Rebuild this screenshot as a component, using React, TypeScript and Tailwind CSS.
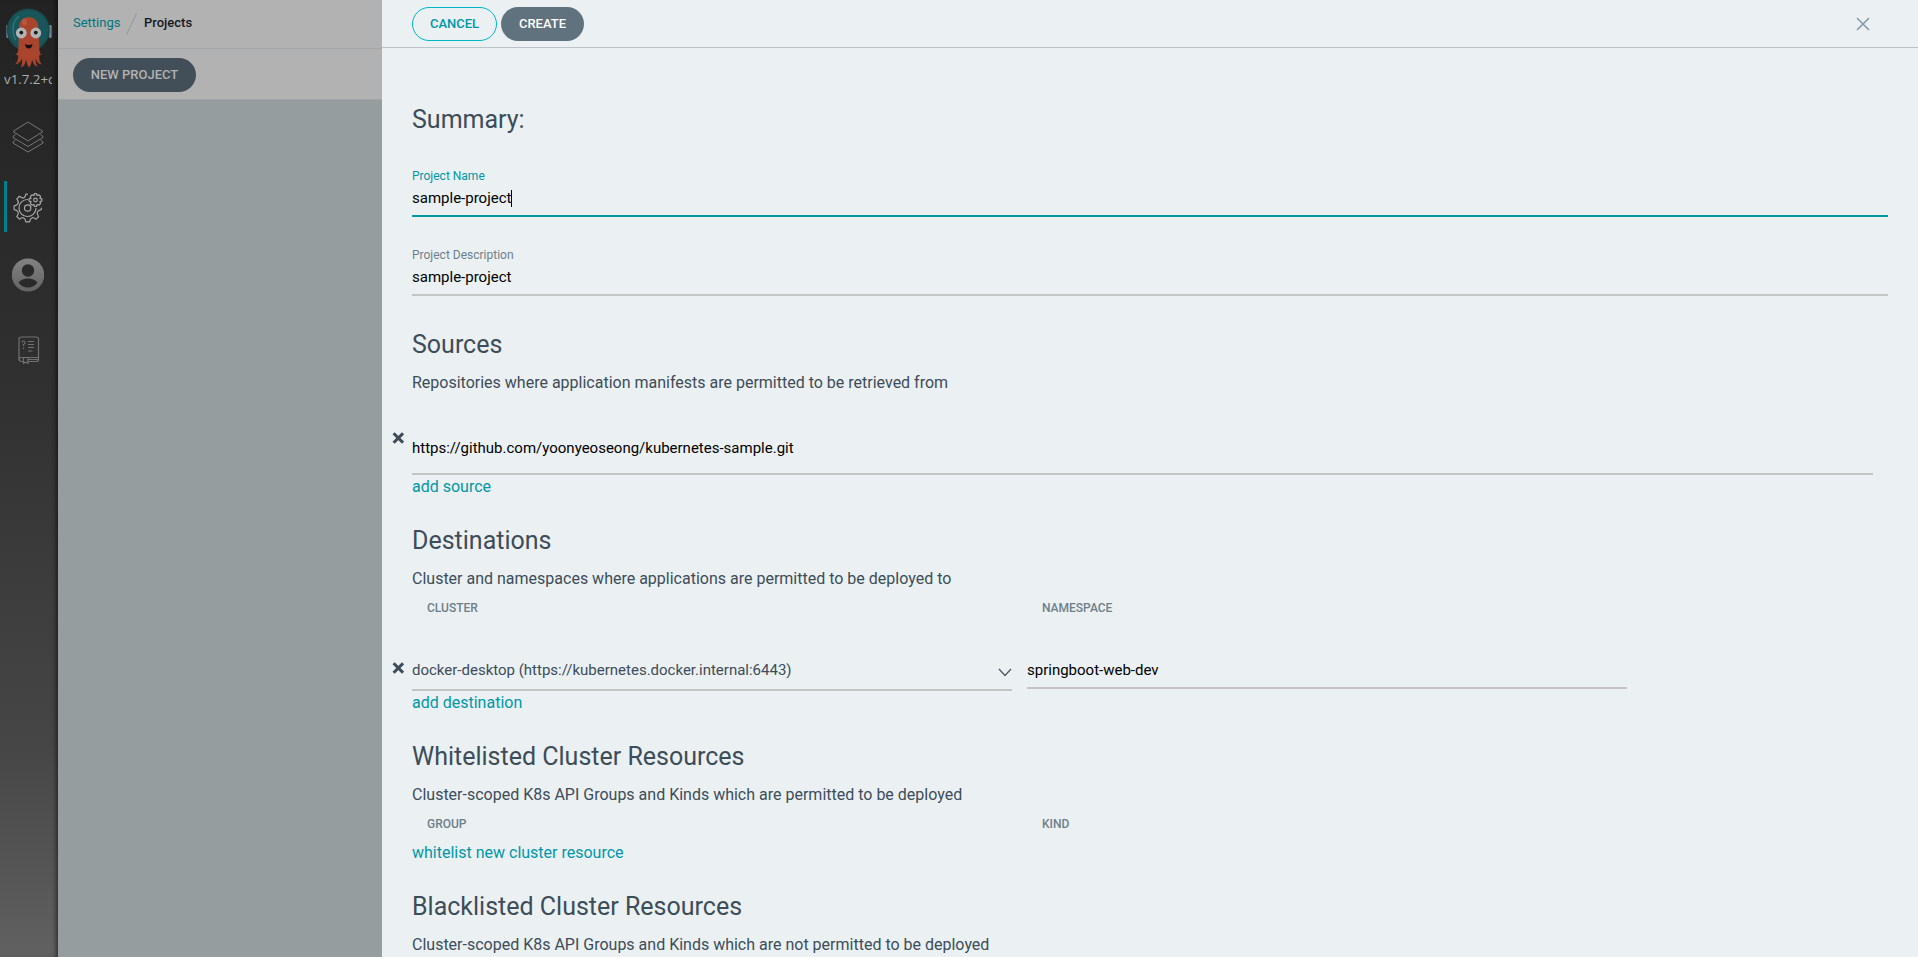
import React from "react";

function Logo() {
  return (
    <svg width="46" height="62" viewBox="0 0 46 62" className="block">
      <rect x="0.300" y="17" width="2.700" height="13" rx="1" fill="#6c8291" />
      <rect x="43" y="17" width="2.700" height="13" rx="1" fill="#6c8291" />
      <circle cx="22.300" cy="22" r="21.500" fill="#1b4a4e" />
      <circle cx="22.300" cy="22" r="19.800" fill="#17565a" />
      <path d="M12.500 8.500Q6.500 14 7 23Q7.300 28 9.500 31.500" fill="none" stroke="#3a7674" strokeWidth="1.200" strokeLinecap="round" />
      <path d="M13 19.500C13 5.500 32.500 5.500 32.500 19.500L33.300 38C33.300 44 34 46.500 36 46.500L33 47.500Q33 53 35.500 56.500Q31.500 56 29.500 50.500Q29.500 56 32 58.500Q27.500 58 26 51.500Q25.500 57 23 59.500Q20.800 57 20 51.500Q19.500 57.500 15 59.500Q16.500 55 16 50.500Q13.500 56 9 56.500Q12.500 53 12.300 47.500L9.500 46.500Q12.500 46 12.500 38Z" fill="#a9452d" />
      <ellipse cx="18.500" cy="14" rx="2.500" ry="3.200" fill="#b4593f" />
      <circle cx="15.300" cy="25" r="5.400" fill="#b3b3b3" />
      <circle cx="29.800" cy="25" r="5.400" fill="#b3b3b3" />
      <circle cx="15.300" cy="24.600" r="1.900" fill="#17181c" />
      <circle cx="29.800" cy="24.600" r="1.900" fill="#17181c" />
      <path d="M19 36Q22.700 38 26.500 36Q26 40.500 22.700 40.500Q19.500 40.500 19 36Z" fill="#1b1010" />
    </svg>
  );
}

function Layers() {
  return (
    <svg width="32" height="32" viewBox="0 0 32 32" fill="none" stroke="#777" strokeWidth="1" strokeLinejoin="round">
      <path d="M16 1L31 10.500L16 20L1 10.500Z" />
      <path d="M3.500 13.500L1 15.500V16.500L16 25.500L31 16.500V15.500L28.500 13.500" />
      <path d="M3.500 19L1 21V22L16 31L31 22V21L28.500 19" />
    </svg>
  );
}

function Gears() {
  return (
    <svg width="32" height="32" viewBox="0 0 30 30" fill="none" stroke="#a9a9a9" strokeWidth="1.100" strokeLinejoin="round" strokeLinecap="round" className="mt-[3px]">
      <path d="M14.500 2L13 2Q12.600 5 11 5.500Q9.500 6 7 4L4.500 6.500Q6.500 9 5.700 10.700Q5 12.500 2 13V16.500Q5 17 5.700 18.700Q6.500 20.500 4.500 23L7 25.500Q9.500 23.500 11 24.300Q12.600 25 13 28H16.500Q16.900 25 18.500 24.300Q20 23.500 22.500 25.500L25 23Q23 20.500 23.800 18.700Q24.500 17 27.500 16.500V15" />
      <path d="M14.500 7A8 8 0 1 0 22.500 15.500" />
      <circle cx="14.700" cy="15" r="3" />
      <circle cx="22" cy="7.500" r="1.700" />
      <path d="M21 1.500H23L23.500 3.300L25.300 2.700L26.800 4.200L26.200 6L28 6.500V8.500L26.200 9L26.800 10.800L25.300 12.300L23.500 11.700L23 13.500H21L20.500 11.700L18.700 12.300L17.200 10.800L17.800 9L16 8.500V6.500L17.800 6L17.200 4.200L18.700 2.700L20.500 3.300Z" />
    </svg>
  );
}

function User() {
  return (
    <svg width="32" height="34" viewBox="0 0 32 34">
      <defs>
        <linearGradient id="u" x1="0" y1="0" x2="0" y2="1">
          <stop offset="0" stopColor="#828282" />
          <stop offset="1" stopColor="#636363" />
        </linearGradient>
      </defs>
      <ellipse cx="16" cy="17" rx="16.300" ry="16.500" fill="url(#u)" />
      <circle cx="16" cy="12.500" r="6.200" fill="#2a2a2a" />
      <path d="M6.500 24.500Q10 20.500 16 20.500Q22 20.500 25.500 24.500Q22 29.500 16 29.500Q10 29.500 6.500 24.500Z" fill="#2a2a2a" />
    </svg>
  );
}

function Book() {
  return (
    <svg width="22" height="28" viewBox="0 0 22 28" fill="none" stroke="#707070" strokeWidth="1.200">
      <path d="M5.500 25.500H3.500Q1 25.500 1 23V3Q1 1 3.500 1H18Q20.500 1 20.500 3V23.500Q20.500 25.500 18.500 25.500H10" />
      <path d="M20.500 21.500H3.500Q1 21.500 1 23.500M10 23.500H20" />
      <path d="M5.500 22V27.500L7.700 26L10 27.500V22" />
      <path d="M10 5.500H16M10 8.500H16M10 11.500H16M10 15H14.500" />
      <path d="M4 6.500Q4 5 5.500 5Q7 5 7 6.500Q7 8 5.500 8.500V10M5.500 11.500V13" />
    </svg>
  );
}

function Times() {
  return (
    <svg width="12" height="12" viewBox="0 0 12 12" className="block" stroke="#3d4c59" strokeWidth="3" strokeLinecap="butt">
      <path d="M1.600 1.300L11 10.700M11 1.300L1.600 10.700" />
    </svg>
  );
}

function Section({ title, text }: { title: string; text: string }) {
  return (
    <>
      <h4 className="h-[35px] text-[25px] leading-[35px]">{title}</h4>
      <p className="mt-[9px] h-6 text-base leading-6">{text}</p>
    </>
  );
}

function Columns({ a, b }: { a: string; b: string }) {
  return (
    <div className="mt-[5px] flex h-6 pl-[15px] text-[12px] font-medium leading-6 text-[#6d7f8b]">
      <div className="w-[615px]">{a}</div>
      <div>{b}</div>
    </div>
  );
}

function Link({ children }: { children: React.ReactNode }) {
  return <a className="block h-6 text-base leading-6 text-[#0097a8]">{children}</a>;
}

export default function App() {
  return (
    <div className="flex h-[957px] w-[1918px] overflow-hidden bg-[#959d9f] font-['Roboto',sans-serif] text-[#3d4c59]">
      <nav className="flex w-[58px] shrink-0 flex-col bg-[linear-gradient(to_bottom,#222222_0%,#303030_40%,#464646_78%,#616161_100%)] shadow-[inset_-4px_0_4px_-2px_rgba(0,0,0,0.5)]">
        <div className="h-[71px] pl-[6px] pt-[8px]"><Logo /></div>
        <div className="ml-[4px] h-[18px] w-[48px] overflow-hidden whitespace-nowrap font-['Open_Sans',sans-serif] text-[13.3px] leading-[16px] text-[#adadad]">v1.7.2+c</div>
        <div className="flex h-[64px] items-end pl-3 pt-[1px]"><Layers /></div>
        <div className="ml-[4px] mt-[28px] flex h-[51px] items-center border-l-[3px] border-[#007f8c] pl-[5px]"><Gears /></div>
        <div className="mt-[26px] h-[34px] pl-3"><User /></div>
        <div className="mt-[44px] pl-[18px]"><Book /></div>
      </nav>
      <div className="w-[324px] shrink-0">
        <div className="flex h-[49px] items-center border-b border-[#a2a8ac] bg-[#b2b2b2] pl-[15px] text-[13px]">
          <span className="-mt-[3px] w-[46px] text-[#007580]">Settings</span>
          <svg width="11" height="22" viewBox="0 0 11 22" className="mx-[7px]"><path d="M.5 21.500L10.500.5" stroke="#8b959d" fill="none" /></svg>
          <span className="-mt-[3px] font-medium text-[#16191f]">Projects</span>
        </div>
        <div className="h-[51px] border-b border-[#9fa6aa] bg-[#b2b2b2] pl-[15px] pt-[9px]">
          <div className="flex h-[34px] w-[123px] items-center justify-center rounded-full bg-[#434f58] text-[13px] font-medium text-[#b2b2b2]">NEW PROJECT</div>
        </div>
      </div>
      <main className="min-w-0 flex-1 bg-[#ebf1f3]">
        <header className="flex h-[48px] items-start border-b border-[#bcc4c9] pl-[30px] pt-[7px] text-[13px] font-medium">
          <div className="flex h-[34px] w-[85px] items-center justify-center rounded-full border border-[#00b5c8] text-[#0097a8]">CANCEL</div>
          <div className="ml-1 flex h-[34px] w-[83px] items-center justify-center rounded-full bg-[#60727e] text-white">CREATE</div>
          <svg width="14" height="14" viewBox="0 0 14 14" className="ml-auto mr-[48px] mt-[10px]" stroke="#8199a6" strokeWidth="1.500"><path d="M1 1L13 13M13 1L1 13" /></svg>
        </header>
        <div className="px-[30px] pt-[54px]">
          <h4 className="h-[35px] text-[25px] leading-[35px]">Summary:</h4>
          <div className="mt-[30px] h-[50px] border-b-2 border-[#0097a8]">
            <div className="h-[19px] text-[12px] leading-[18px] text-[#0097a8]">Project Name</div>
            <div className="flex h-[24px] items-center text-[15px] leading-6 text-black">sample-project<span className="h-[17px] w-px bg-black" /></div>
          </div>
          <div className="mt-[29px] h-[50px] border-b-2 border-[#c2c4c5]">
            <div className="h-[19px] text-[12px] leading-[18px] text-[#6d7f8b]">Project Description</div>
            <div className="h-[24px] text-[15px] leading-6 text-black">sample-project</div>
          </div>
          <div className="mt-[31px]"><Section title="Sources" text="Repositories where application manifests are permitted to be retrieved from" /></div>
          <div className="-ml-5 mr-[15px] mt-[37px] flex h-[43px]">
            <div className="w-5"><Times /></div>
            <div className="flex-1 border-b-2 border-[#c2c4c5] pt-[4px] text-[15px] leading-6 text-black">https://github.com/yoonyeoseong/kubernetes-sample.git</div>
          </div>
          <Link>add source</Link>
          <div className="mt-[24px]"><Section title="Destinations" text="Cluster and namespaces where applications are permitted to be deployed to" /></div>
          <Columns a="CLUSTER" b="NAMESPACE" />
          <div className="-ml-5 mt-[38px] flex h-[33px] items-start">
            <div className="w-5 pt-[4px]"><Times /></div>
            <div className="flex h-[33px] w-[600px] justify-between border-b-2 border-[#c2c4c5] text-[15px] leading-6">
              <span>docker-desktop (https://kubernetes.docker.internal:6443)</span>
              <svg width="14" height="9" viewBox="0 0 14 9" className="mt-[10px]" fill="none" stroke="#4b5a66" strokeWidth="1.300"><path d="M1 1L7 7.500L13 1" /></svg>
            </div>
            <div className="ml-[15px] h-[31px] w-[600px] border-b-2 border-[#c2c4c5] text-[15px] leading-6 text-black">springboot-web-dev</div>
          </div>
          <Link>add destination</Link>
          <div className="mt-[24px]"><Section title="Whitelisted Cluster Resources" text="Cluster-scoped K8s API Groups and Kinds which are permitted to be deployed" /></div>
          <Columns a="GROUP" b="KIND" />
          <div className="mt-[5px]"><Link>whitelist new cluster resource</Link></div>
          <div className="mt-[24px]"><Section title="Blacklisted Cluster Resources" text="Cluster-scoped K8s API Groups and Kinds which are not permitted to be deployed" /></div>
        </div>
      </main>
    </div>
  );
}
